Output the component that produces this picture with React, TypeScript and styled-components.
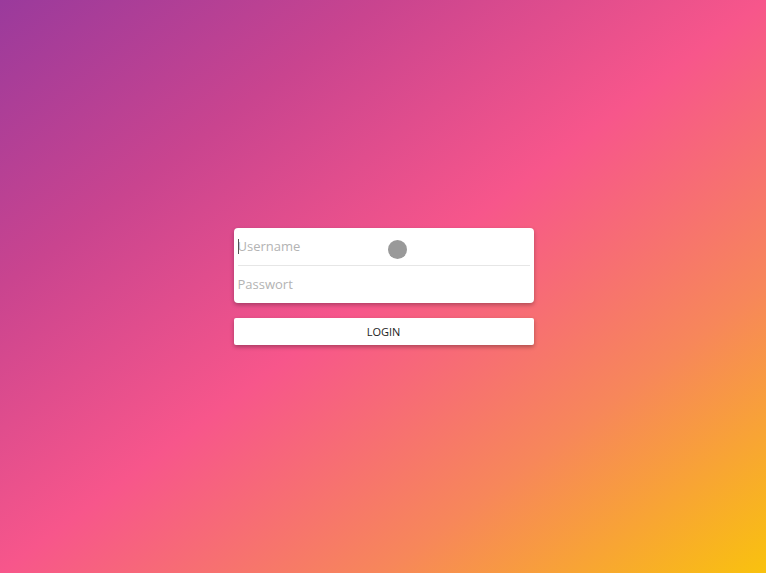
import React from "react";
import styled, { createGlobalStyle } from "styled-components";

const Global = createGlobalStyle`
  html, body { margin: 0; padding: 0; height: 100%; }
  body { font-family: "Open Sans", "Noto Sans", sans-serif; }
  #root { height: 100%; }
  * { box-sizing: border-box; }
`;

const Page = styled.div`
  width: 100%;
  height: 100vh;
  display: flex;
  align-items: center;
  justify-content: center;
  background: linear-gradient(to bottom right, #9a3a9c 0%, #c9448f 25%, #f7568b 50%, #f7875a 75%, #f9c20e 100%);
`;

const Form = styled.form`
  width: 300px;
  display: flex;
  flex-direction: column;
  gap: 15px;
  margin-left: 1px;
`;

const Card = styled.div`
  position: relative;
  background: #fff;
  border-radius: 4px;
  box-shadow: 0 2px 4px rgba(0, 0, 0, 0.28);
  display: flex;
  flex-direction: column;
`;

const Row = styled.div<{ $divider?: boolean }>`
  position: relative;
  height: 37.5px;
  margin: 0 4px;
  display: flex;
  align-items: center;
  border-bottom: ${(p) => (p.$divider ? "1px solid #e6e6e6" : "none")};
`;

const Input = styled.input`
  width: 100%;
  border: none;
  outline: none;
  background: transparent;
  font-family: "Open Sans", "Noto Sans", sans-serif;
  font-size: 13px;
  color: #333;
  padding: 0;
  caret-color: transparent;
  &::placeholder { color: #b3b3b3; }
`;

const Caret = styled.span`
  position: absolute;
  left: 0;
  top: 11px;
  width: 1px;
  height: 15px;
  background: #555;
`;

const Touch = styled.span`
  position: absolute;
  left: 154px;
  top: 12px;
  width: 19px;
  height: 19px;
  border-radius: 50%;
  background: #999;
`;

const Button = styled.button`
  height: 27px;
  border: none;
  border-radius: 2px;
  background: #fff;
  box-shadow: 0 2px 4px rgba(0, 0, 0, 0.3);
  font-family: "Open Sans", "Noto Sans", sans-serif;
  font-size: 11px;
  color: #222;
  cursor: pointer;
  padding: 0;
`;

export default function App() {
  return (
    <>
      <Global />
      <Page>
        <Form onSubmit={(e) => e.preventDefault()}>
          <Card>
            <Row $divider>
              <Input placeholder="Username" />
              <Caret />
            </Row>
            <Row>
              <Input type="password" placeholder="Passwort" />
            </Row>
            <Touch />
          </Card>
          <Button type="submit">LOGIN</Button>
        </Form>
      </Page>
    </>
  );
}
